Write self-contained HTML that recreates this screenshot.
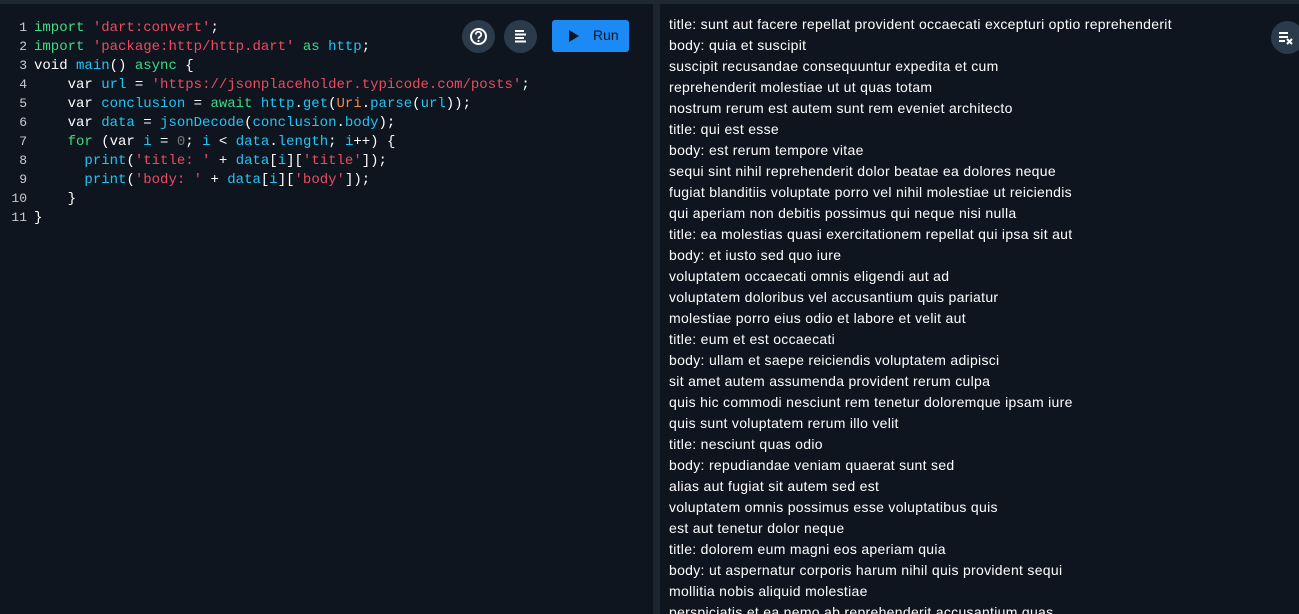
<!DOCTYPE html>
<html><head><meta charset="utf-8"><style>
*{margin:0;padding:0;box-sizing:border-box}
html,body{width:1299px;height:614px;overflow:hidden}
body{background:#0e151e;position:relative;font-family:"Liberation Sans",sans-serif}
.top{position:absolute;left:0;top:0;width:1299px;height:4px;background:#1d2833}
.div{position:absolute;left:653px;top:4px;width:7px;height:610px;background:#1b2630}
.code{position:absolute;left:0;top:18px;font-family:"Liberation Mono",monospace;font-size:14px;color:#fff;white-space:pre}
.code div{height:19px;line-height:19px}
.ln{display:inline-block;width:27px;text-align:right;color:#c8ccd0;margin-right:7px;font-size:13px;line-height:19px}
.k{color:#3ddc84}.s{color:#ee4a5f}.i{color:#22c4f5}.o{color:#f58a4a}.n{color:#777}
.btn{position:absolute;top:20px;width:33px;height:33px;border-radius:50%;background:#2c3b4b}
.run{position:absolute;left:552px;top:20px;width:77px;height:32px;background:#1c8af5;border-radius:3px;color:#0e151e;font-size:14px}
.out{position:absolute;left:669px;top:14px;color:#fff;font-size:14px;line-height:21px;white-space:pre;letter-spacing:0.3px}
.clr{position:absolute;left:1271px;top:21px;width:33px;height:33px;border-radius:50%;background:#2c3b4b}
</style></head><body>
<div class="top"></div><div class="div"></div>
<div class="code"><div><span class="ln">1</span><span class="k">import</span> <span class="s">'dart:convert'</span>;</div><div><span class="ln">2</span><span class="k">import</span> <span class="s">'package:http/http.dart'</span> <span class="k">as</span> <span class="i">http</span>;</div><div><span class="ln">3</span>void <span class="i">main</span>() <span class="k">async</span> {</div><div><span class="ln">4</span>    var <span class="i">url</span> = <span class="s">'https://jsonplaceholder.typicode.com/posts'</span>;</div><div><span class="ln">5</span>    var <span class="i">conclusion</span> = <span class="k">await</span> <span class="i">http</span>.<span class="i">get</span>(<span class="o">Uri</span>.<span class="i">parse</span>(<span class="i">url</span>));</div><div><span class="ln">6</span>    var <span class="i">data</span> = <span class="i">jsonDecode</span>(<span class="i">conclusion</span>.<span class="i">body</span>);</div><div><span class="ln">7</span>    <span class="k">for</span> (var <span class="i">i</span> = <span class="n">0</span>; <span class="i">i</span> &lt; <span class="i">data</span>.<span class="i">length</span>; <span class="i">i</span>++) {</div><div><span class="ln">8</span>      <span class="i">print</span>(<span class="s">'title: '</span> + <span class="i">data</span>[<span class="i">i</span>][<span class="s">'title'</span>]);</div><div><span class="ln">9</span>      <span class="i">print</span>(<span class="s">'body: '</span> + <span class="i">data</span>[<span class="i">i</span>][<span class="s">'body'</span>]);</div><div><span class="ln">10</span>    }</div><div><span class="ln">11</span>}</div></div>
<div class="btn" style="left:462px"><svg width="33" height="33" viewBox="0 0 33 33"><circle cx="16.5" cy="16.5" r="7.5" fill="none" stroke="#fff" stroke-width="2"/><path d="M13.8 14.5a2.7 2.7 0 1 1 3.8 2.4c-.8.4-1.1.9-1.1 1.8" fill="none" stroke="#fff" stroke-width="1.8"/><circle cx="16.5" cy="21" r="1.1" fill="#fff"/></svg></div>
<div class="btn" style="left:504px"><svg width="33" height="33" viewBox="0 0 33 33" fill="#fff"><rect x="11" y="10" width="9" height="2"/><rect x="11" y="13.5" width="11" height="2"/><rect x="11" y="17" width="9" height="2"/><rect x="11" y="20.5" width="11" height="2"/></svg></div>
<div class="run"><svg style="position:absolute;left:17px;top:10px" width="10" height="12"><path d="M0 0L10 6L0 12Z" fill="#0e151e"/></svg><span style="position:absolute;left:41px;top:7px">Run</span></div>
<div class="clr"><svg width="33" height="33" viewBox="0 0 33 33" fill="#fff"><rect x="8" y="11" width="9" height="2"/><rect x="8" y="15" width="9" height="2"/><rect x="8" y="19" width="6" height="2"/><path d="M16 18l5 5M21 18l-5 5" stroke="#fff" stroke-width="2"/></svg></div>
<div class="out">title: sunt aut facere repellat provident occaecati excepturi optio reprehenderit
body: quia et suscipit
suscipit recusandae consequuntur expedita et cum
reprehenderit molestiae ut ut quas totam
nostrum rerum est autem sunt rem eveniet architecto
title: qui est esse
body: est rerum tempore vitae
sequi sint nihil reprehenderit dolor beatae ea dolores neque
fugiat blanditiis voluptate porro vel nihil molestiae ut reiciendis
qui aperiam non debitis possimus qui neque nisi nulla
title: ea molestias quasi exercitationem repellat qui ipsa sit aut
body: et iusto sed quo iure
voluptatem occaecati omnis eligendi aut ad
voluptatem doloribus vel accusantium quis pariatur
molestiae porro eius odio et labore et velit aut
title: eum et est occaecati
body: ullam et saepe reiciendis voluptatem adipisci
sit amet autem assumenda provident rerum culpa
quis hic commodi nesciunt rem tenetur doloremque ipsam iure
quis sunt voluptatem rerum illo velit
title: nesciunt quas odio
body: repudiandae veniam quaerat sunt sed
alias aut fugiat sit autem sed est
voluptatem omnis possimus esse voluptatibus quis
est aut tenetur dolor neque
title: dolorem eum magni eos aperiam quia
body: ut aspernatur corporis harum nihil quis provident sequi
mollitia nobis aliquid molestiae
perspiciatis et ea nemo ab reprehenderit accusantium quas</div>
</body></html>
